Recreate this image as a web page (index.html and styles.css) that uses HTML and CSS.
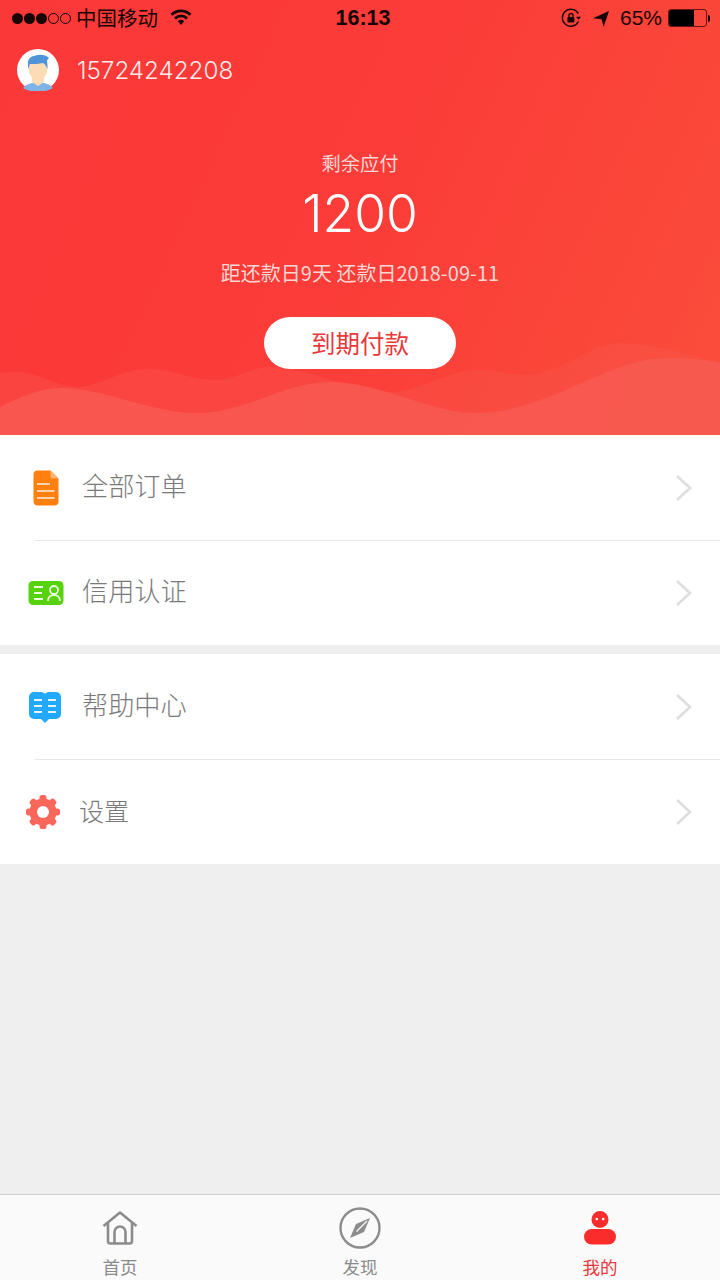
FILE: index.html
```html
<!DOCTYPE html>
<html lang="zh">
<head>
<meta charset="utf-8">
<title>我的</title>
<link rel="stylesheet" href="styles.css">
</head>
<body>
<div class="app">
  <header class="hero">
    <svg class="waves" viewBox="0 0 720 100" preserveAspectRatio="none">
      <path class="wave-back" d="M0 38C5 37 10 37 15 37C40 37 55 52 78 52C100 52 120 34 147 34C175 34 190 45 215 45C235 45 250 32 270 32C310 32 350 57 390 57C420 57 450 35 477 35C495 35 510 40 527 40C560 40 590 8 620 8C655 8 690 20 720 28V100H0Z"/>
      <path class="wave-front" d="M0 72C20 62 40 53 60 53C105 53 150 78 197 78C245 78 285 47 330 47C380 47 430 78 477 78C545 78 610 23 665 23C685 23 705 25 720 27V100H0Z"/>
    </svg>
    <div class="status">
      <div class="status-left">
        <span class="dots"><i class="dot"></i><i class="dot"></i><i class="dot"></i><i class="dot off"></i><i class="dot off"></i></span>
        <span class="carrier">中国移动</span>
        <svg class="wifi" width="22" height="17" viewBox="0 0 22 17"><path class="wifi-arc" d="M1.500 5.700A13.500 13.500 0 0 1 20.500 5.700"/><path class="wifi-arc" d="M5 9.400A8.500 8.500 0 0 1 17 9.400"/><path d="M7.800 12.200A4.800 4.800 0 0 1 14.200 12.200L11 16Z"/></svg>
      </div>
      <div class="clock">16:13</div>
      <div class="status-right">
        <svg class="lock" width="20" height="20" viewBox="0 0 20 20"><path class="lock-ring" d="M17.500 13.500A8.500 8.500 0 1 1 17.300 5.600"/><path d="M15 8.800L20 8.800L17.500 11.800Z"/><rect x="6.400" y="9" width="7" height="5.500" rx="0.800"/><path class="lock-ring" d="M8 9V7.500a2 2 0 0 1 4 0V9"/></svg>
        <svg class="arrow" width="16" height="17" viewBox="0 0 16 17"><path d="M0 8.200L16 1L10.600 17L8.600 9.200Z"/></svg>
        <span class="pct">65%</span>
        <span class="battery"><span class="battery-fill"></span></span><span class="battery-tip"></span>
      </div>
    </div>
    <div class="user">
      <svg class="avatar" width="42" height="42" viewBox="0 0 42 42">
        <circle cx="21" cy="21" r="21" fill="#fff"/>
        <path d="M6 39C9 35 14 34 21 33C28 34 33 35 36 39C28 44 14 44 6 39Z" fill="#7fb2e5"/>
        <path d="M15 27H27V33L21 37L15 33Z" fill="#fbdcb4"/>
        <ellipse cx="21" cy="19" rx="9.500" ry="12" fill="#fbdcb4"/>
        <path d="M11.500 20C10 13 11 8 17 7C22 5 28 5 32 9L30 11.500C30.500 14 30.500 17 30.500 20C29 17 28 15 26 14C22 15 16 15 13 15C12 17 12 18 11.500 20Z" fill="#4f93d8"/>
      </svg>
      <span class="phone">15724242208</span>
    </div>
    <div class="due">
      <div class="due-label">剩余应付</div>
      <div class="due-amount">1200</div>
      <div class="due-date">距还款日9天 还款日2018-09-11</div>
      <div class="pay-btn">到期付款</div>
    </div>
  </header>

  <section class="group">
    <div class="row">
      <span class="ico"><svg width="26" height="36" viewBox="0 0 26 36"><path d="M4 0.500H17.500L25.500 8.500V31.500A4 4 0 0 1 21.500 35.500H4A4 4 0 0 1 0.500 31.500V4A4 4 0 0 1 4 0.500Z" fill="#ff7f0f"/><path d="M17.500 0.500L25.500 8.500H19.500A2 2 0 0 1 17.500 6.500Z" fill="#ffb672"/><path d="M4 14H17M4 21H21.500M4 28H21.500" stroke="#ffefdd" stroke-width="1.700"/></svg></span>
      <span class="label">全部订单</span>
      <svg class="chev" width="18" height="28" viewBox="0 0 18 28"><path d="M2 2L15 14L2 26"/></svg>
    </div>
    <div class="row">
      <span class="ico"><svg width="36" height="26" viewBox="0 0 36 26"><rect x="0.500" y="1" width="35" height="24" rx="4.500" fill="#58d10f"/><path d="M6 7H15M6 13H14M6 19H15M20 21C20 17 23 15 26 15C29 15 32 17 32 21" stroke="#eaffdc" stroke-width="1.800" fill="none"/><circle cx="26" cy="10" r="4" stroke="#eaffdc" stroke-width="1.800" fill="none"/></svg></span>
      <span class="label">信用认证</span>
      <svg class="chev" width="18" height="28" viewBox="0 0 18 28"><path d="M2 2L15 14L2 26"/></svg>
    </div>
  </section>

  <section class="group">
    <div class="row row-book">
      <span class="ico"><svg width="32" height="32" viewBox="0 0 32 32"><path d="M5 1H12C14 1 15.500 2 16 3C16.500 2 18 1 20 1H27A5 5 0 0 1 32 6V23A5 5 0 0 1 27 28H20L16 32L12 28H5A5 5 0 0 1 0 23V6A5 5 0 0 1 5 1Z" fill="#23a9fb"/><path d="M5 9H13M5 15H13M5 21H13M19 9H27M19 15H27M19 21H27" stroke="#e3f4ff" stroke-width="1.800"/></svg></span>
      <span class="label">帮助中心</span>
      <svg class="chev" width="18" height="28" viewBox="0 0 18 28"><path d="M2 2L15 14L2 26"/></svg>
    </div>
    <div class="row row-plain">
      <span class="ico"><svg width="36" height="36" viewBox="0 0 36 36"><g fill="#f9675a"><circle cx="18" cy="18" r="13.500"/><rect x="14.500" y="1" width="7" height="34" rx="2.500"/><rect x="14.500" y="1" width="7" height="34" rx="2.500" transform="rotate(45 18 18)"/><rect x="14.500" y="1" width="7" height="34" rx="2.500" transform="rotate(90 18 18)"/><rect x="14.500" y="1" width="7" height="34" rx="2.500" transform="rotate(135 18 18)"/></g><circle cx="18" cy="18" r="6" fill="#fff"/></svg></span>
      <span class="label">设置</span>
      <svg class="chev" width="18" height="28" viewBox="0 0 18 28"><path d="M2 2L15 14L2 26"/></svg>
    </div>
  </section>

  <div class="spacer"></div>

  <nav class="tabs">
    <div class="tab">
      <svg width="36" height="34" viewBox="0 0 36 34" class="tab-ico"><path d="M1.500 15L18 1.500L34.500 15M6 12V30A2.500 2.500 0 0 0 8.500 32.500H27.500A2.500 2.500 0 0 0 30 30V12M12.500 32V21A5.500 5.500 0 0 1 23.500 21V32" fill="none" stroke="#8c8c8c" stroke-width="2.600" stroke-linejoin="round"/></svg>
      <span>首页</span>
    </div>
    <div class="tab">
      <svg width="42" height="42" viewBox="0 0 42 42" class="tab-ico compass"><circle cx="21" cy="21" r="19.500" fill="none" stroke="#8c8c8c" stroke-width="2.400"/><path d="M31 11L25 25L11 31L17 17Z" fill="#8c8c8c"/><path d="M17.500 24.500L28 14" stroke="#fafafa" stroke-width="1.200"/></svg>
      <span>发现</span>
    </div>
    <div class="tab active">
      <svg width="32" height="34" viewBox="0 0 32 34" class="tab-ico"><circle cx="16" cy="8.500" r="8.500" fill="#fb2c2c"/><circle cx="12.800" cy="8" r="1.300" fill="#fff"/><circle cx="19.200" cy="8" r="1.300" fill="#fff"/><rect x="0" y="18" width="32" height="15.500" rx="7.700" fill="#fb2c2c"/></svg>
      <span>我的</span>
    </div>
  </nav>
</div>
</body>
</html>
```

FILE: styles.css
```css
* { box-sizing: border-box; }
html, body { margin: 0; padding: 0; }
body {
  width: 720px;
  height: 1280px;
  overflow: hidden;
  background: #efefef;
  font-family: "Noto Sans CJK SC", "Noto Sans", sans-serif;
}
.app { display: flex; flex-direction: column; height: 1280px; }

.hero {
  position: relative;
  height: 435px;
  color: #fff;
  background: linear-gradient(115deg, #fb3838 0%, #fb3c38 50%, #fa4d3b 100%);
  overflow: hidden;
}
.waves { position: absolute; left: 0; bottom: 0; width: 720px; height: 100px; }
.wave-back { fill: rgba(247, 92, 84, 0.3); }
.wave-front { fill: rgba(247, 92, 84, 0.75); }

.status {
  position: relative;
  height: 36px;
  display: grid;
  grid-template-columns: 1fr auto 1fr;
  align-items: center;
  color: #170505;
  font-family: "Liberation Sans", "Noto Sans CJK SC", sans-serif;
  font-size: 22px;
  padding: 0 10px 0 12px;
}
.status-left { display: flex; align-items: center; }
.dots { display: flex; gap: 1px; margin-right: 5px; }
.dot { width: 11px; height: 11px; border-radius: 50%; background: #170505; }
.dot.off { background: none; border: 1px solid #170505; }
.carrier {
  font-family: "Noto Sans CJK SC", sans-serif;
  font-size: 20.500px;
  line-height: 34px;
  padding-bottom: 2px;
  margin-right: 12px;
}
.wifi { fill: #170505; margin-top: -2px; }
.wifi-arc { fill: none; stroke: #170505; stroke-width: 2.800; }
.clock { font-weight: 700; font-size: 21.500px; padding-left: 4px; }
.status-right { display: flex; align-items: center; justify-content: flex-end; }
.lock { fill: #170505; margin-right: 12px; }
.lock-ring { fill: none; stroke: #170505; stroke-width: 1.400; }
.arrow { fill: #170505; margin-right: 11px; }
.pct { font-size: 21px; margin-right: 6px; }
.battery {
  width: 39px;
  height: 18px;
  border: 1px solid rgba(40, 0, 0, 0.7);
  border-radius: 3px;
  display: flex;
  overflow: hidden;
}
.battery-fill { width: 25px; background: #000; }
.battery-tip { width: 2px; height: 7px; margin-left: 1px; background: #170505; border-radius: 0 2px 2px 0; }

.user {
  position: relative;
  display: flex;
  align-items: center;
  height: 42px;
  margin-top: 13px;
  padding-left: 17px;
}
.phone {
  margin-left: 18px;
  font-family: "Inter", sans-serif;
  font-weight: 300;
  font-size: 24.200px;
  color: #fdeaea;
}

.due {
  position: relative;
  display: flex;
  flex-direction: column;
  align-items: center;
  margin-top: 58px;
}
.due-label { font-size: 19.250px; line-height: 28px; color: #fbd6d3; }
.due-amount {
  font-family: "Inter", sans-serif;
  font-weight: 300;
  font-size: 51.500px;
  line-height: 60px;
  margin-top: 6px;
}
.due-date { font-size: 20px; line-height: 28px; color: #fbd6d3; margin-top: 16px; }
.pay-btn {
  width: 192px;
  height: 52px;
  margin-top: 30px;
  background: #fff;
  border-radius: 26px;
  color: #e8383a;
  font-size: 24.500px;
  line-height: 52px;
  text-align: center;
}

.group { background: #fff; margin-bottom: 9px; }
.group:last-of-type { margin-bottom: 0; }
.row {
  display: flex;
  align-items: center;
  height: 105px;
  position: relative;
}
.row + .row::before {
  content: "";
  position: absolute;
  left: 35px;
  right: 0;
  top: 0;
  height: 1px;
  background: #e8e8e8;
}
.ico { width: 82px; display: flex; justify-content: center; padding-left: 9px; flex: none; }
.label { flex: 1; font-size: 26.200px; font-weight: 300; color: #7a7a7a; padding-bottom: 5px; }
.row-book .ico { padding-left: 8px; padding-right: 1px; }
.row-plain .ico { width: 79px; padding-left: 7px; }
.row-plain .label { font-size: 25px; padding-bottom: 3px; }
.chev { fill: none; stroke: #dedede; stroke-width: 2.600; margin-right: 27px; }

.spacer { flex: 1; }

.tabs {
  display: grid;
  grid-template-columns: repeat(3, 1fr);
  height: 86px;
  background: #fafafa;
  border-top: 1px solid #cfcfcf;
}
.tab {
  display: flex;
  flex-direction: column;
  align-items: center;
  font-size: 17.500px;
  color: #8a8a8a;
  padding-top: 16px;
  position: relative;
}
.tab span { position: absolute; top: 60px; line-height: 24px; }
.tab-ico { display: block; }
.compass { margin-top: -4px; }
.tab.active { color: #e8383a; }
```
